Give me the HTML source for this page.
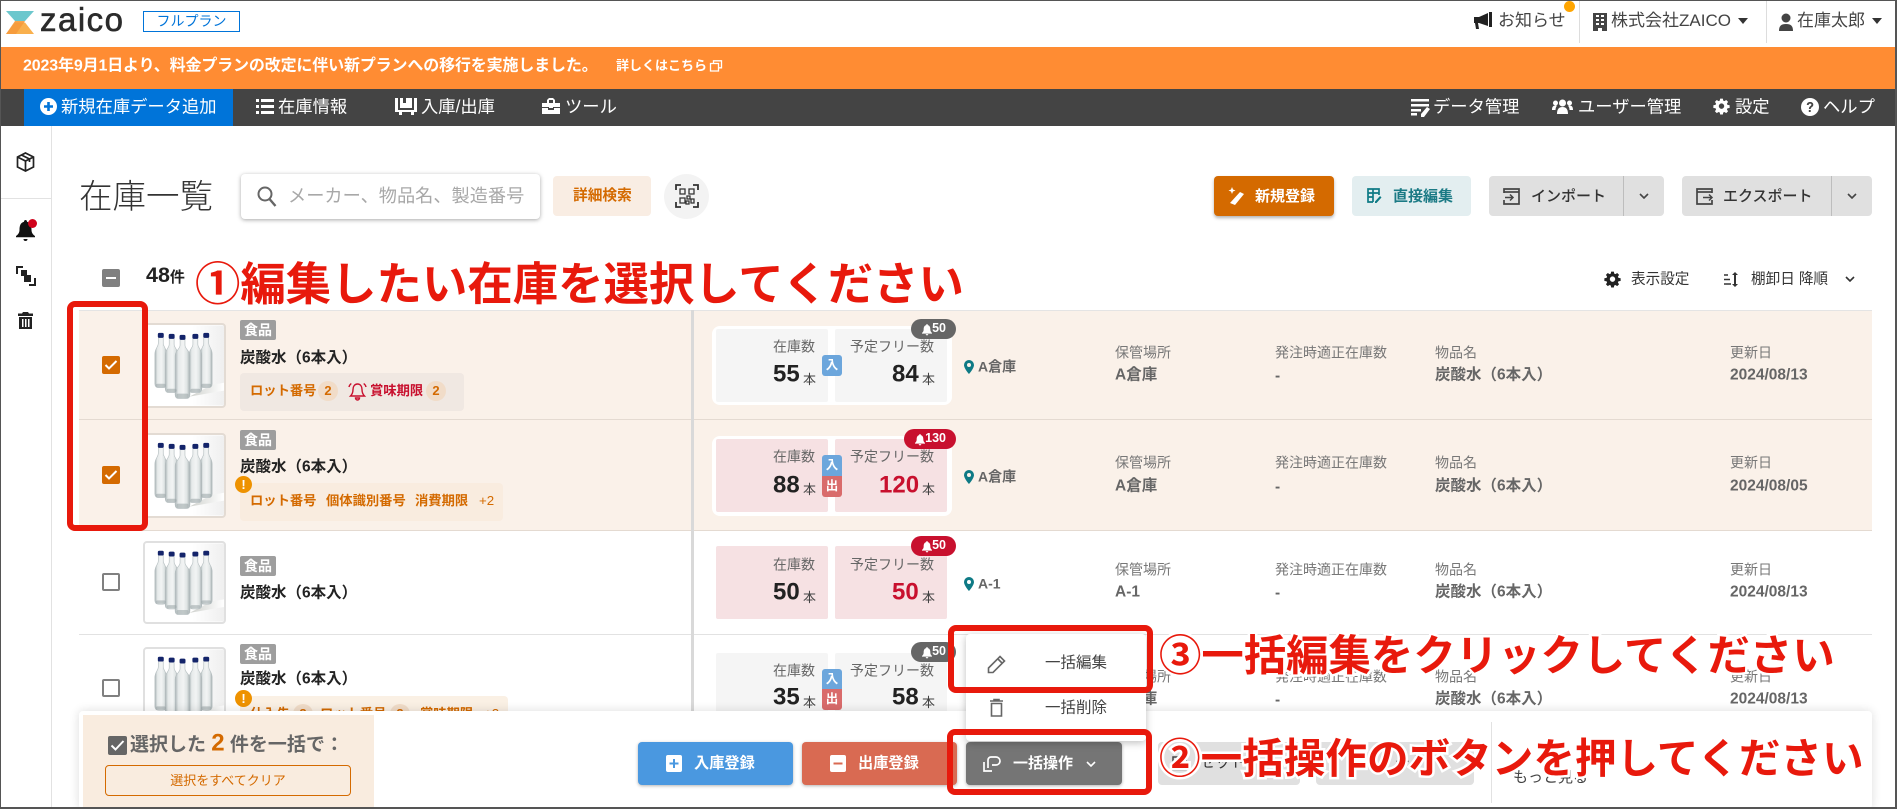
<!DOCTYPE html>
<html lang="ja"><head><meta charset="utf-8"><title>在庫一覧</title>
<style>
*{box-sizing:border-box;margin:0;padding:0}
html,body{width:1897px;height:809px;overflow:hidden;background:#fff}
body{position:relative;font-family:"Liberation Sans","Noto Sans CJK JP",sans-serif;color:#333}
.a{position:absolute}
.t{position:absolute;white-space:nowrap;transform:translateY(-50%);line-height:1.2}
.b{font-weight:700}
svg{position:absolute;overflow:visible}
.nav{color:#fff;font-size:17.3px}
.btn{position:absolute;border-radius:4px}
.lbl{font-size:14px;color:#777}
.val{font-size:15.5px;font-weight:700;color:#666}
.cell{position:absolute;width:112px;border-radius:2px}
.sl{font-size:14px;color:#666}
.num{font-size:24px;font-weight:700;color:#222}
.u{font-size:13px;color:#444}
.tag{position:absolute;left:240px;width:36px;height:20px;background:#9e9e9e;border-radius:2px;color:#fff;font-weight:700;font-size:14px;line-height:20px;text-align:center}
.nm{font-size:15.5px;font-weight:700;color:#222;left:240px}
.img{position:absolute;left:143px;width:83px;background:#fff;border:2px solid #e0e0e0;border-radius:4px;overflow:hidden}
.o{color:#d46a00;font-weight:700;font-size:13.3px}
.r{color:#c8102e;font-weight:700;font-size:13.3px}
.c2{position:absolute;width:20px;height:20px;border-radius:50%;background:#f1dcc8;color:#d46a00;font-size:13px;font-weight:700;text-align:center;line-height:20px}
.io{position:absolute;left:822px;width:20px;height:21px;color:#fff;font-size:12.5px;font-weight:700;text-align:center;line-height:21px}
.bd{position:absolute;height:20px;border-radius:10px;color:#fff;font-size:12.5px;font-weight:700;line-height:19px;text-align:right;padding-right:10px}
.rect{position:absolute;border:6px solid #e8190c;border-radius:8px}
.big{position:absolute;white-space:nowrap;transform:translateY(-50%);color:#e8190c;font-weight:700;line-height:1.2;-webkit-text-stroke:5px #fff;paint-order:stroke fill}
.cb{position:absolute;left:102px;width:18px;height:18px;border-radius:2px}
</style></head><body>
<svg width="0" height="0" style="position:absolute"><defs>
<linearGradient id="bg" x1="0" x2="1" y1="0" y2="0"><stop offset="0" stop-color="#a9b3b5"/><stop offset=".22" stop-color="#e6eaea"/><stop offset=".55" stop-color="#f2f4f4"/><stop offset=".8" stop-color="#dfe4e4"/><stop offset="1" stop-color="#a3adaf"/></linearGradient>
<linearGradient id="sh" x1="0" x2="1" y1="0" y2="0"><stop offset="0" stop-color="#cfd1cd"/><stop offset="1" stop-color="#fff"/></linearGradient>
<linearGradient id="bk" x1="0" x2="1" y1="0" y2="0"><stop offset=".6" stop-color="#fff"/><stop offset="1" stop-color="#efefef"/></linearGradient>
<symbol id="bot" viewBox="0 0 80 81">
<rect width="80" height="81" fill="url(#bk)"/>
<path d="M45 72 L68 60 L80 58 L80 66Z" fill="url(#sh)"/>
<g stroke="#b4bdbf" stroke-width=".6" fill="url(#bg)">
<path d="M13.500 12h5v6c0 4 3.500 5 3.500 11V59q0 4-4 4h-4q-4 0-4-4V29c0-6 3.500-7 3.500-11z"/>
<path d="M59.500 12h5v6c0 4 3.500 5 3.500 11V59q0 4-4 4h-4q-4 0-4-4V29c0-6 3.500-7 3.500-11z"/>
<path d="M24.500 13h5v6c0 4 4 5 4 11V64q0 4-4 4h-5q-4 0-4-4V30c0-6 4-7 4-11z"/>
<path d="M48.500 13h5v6c0 4 4 5 4 11V64q0 4-4 4h-5q-4 0-4-4V30c0-6 4-7 4-11z"/>
<path d="M35.500 14h5v6c0 4 5 5 5 11V70q0 4-4 4h-7q-4 0-4-4V31c0-6 5-7 5-11z"/>
</g>
<g fill="#9aa5a7" opacity=".55"><rect x="11" y="59" width="10" height="3.500" rx="1.500"/><rect x="57" y="59" width="10" height="3.500" rx="1.500"/><rect x="22" y="64" width="10" height="3.500" rx="1.500"/><rect x="46" y="64" width="10" height="3.500" rx="1.500"/><rect x="32" y="69" width="12" height="4.500" rx="1.500"/></g>
<g fill="#14246a"><rect x="13" y="7.500" width="6" height="5" rx="1.500"/><rect x="59" y="7.500" width="6" height="5" rx="1.500"/><rect x="24" y="8.500" width="6" height="5" rx="1.500"/><rect x="48" y="8.500" width="6" height="5" rx="1.500"/><rect x="35" y="9.500" width="6" height="5" rx="1.500"/></g>
</symbol>
<symbol id="bell" viewBox="0 0 12 14"><path d="M6 0a1 1 0 0 1 1 1.200C9.500 1.800 10 4 10 6.500c0 2 1 3.200 2 4v.8H0v-.8c1-.8 2-2 2-4C2 4 2.500 1.800 5 1.200A1 1 0 0 1 6 0zM4.500 12h3a1.500 1.500 0 0 1-3 0z" fill="currentColor"/></symbol>
<symbol id="pin" viewBox="0 0 10 14"><path d="M5 0a5 5 0 0 1 5 5c0 3.500-5 9-5 9S0 8.500 0 5a5 5 0 0 1 5-5zm0 3a2 2 0 1 0 0 4 2 2 0 0 0 0-4z" fill="#0e7a85"/></symbol>
<symbol id="gear" viewBox="0 0 16 16"><path fill-rule="evenodd" d="M6.500 0h3l.4 2.200 1.400.6L13.200 1.500l2.100 2.100-1.300 1.900.6 1.400 2.400.4v3l-2.400.4-.6 1.400 1.300 1.900-2.100 2.100-1.900-1.300-1.400.6-.4 2.200h-3l-.4-2.200-1.400-.6-1.900 1.300L.7 14l1.300-1.900-.6-1.400L-1 10.300v-3l2.400-.4.6-1.400L.7 3.600l2.100-2.100 1.900 1.300 1.400-.6zM8 5.300a3 3 0 1 0 0 6 3 3 0 0 0 0-6z" fill="currentColor" transform="translate(1.200 .6) scale(.85)"/></symbol>
<symbol id="chev" viewBox="0 0 10 6"><path d="M1 1l4 4 4-4" fill="none" stroke="currentColor" stroke-width="1.600"/></symbol>
</defs></svg>

<!-- header -->
<svg style="left:6px;top:11px" width="28" height="23" viewBox="0 0 28 23"><path d="M0 0h28l-9 10H9z" fill="#6cc7cd"/><path d="M9 11.500h10l9 11.500H0z" fill="#f9b04d"/><path d="M9 10h10L10 23H0z" fill="#f59a3c" opacity=".9"/></svg>
<div class="t" style="left:40px;top:20px;font-size:33px;color:#2b2b2b;letter-spacing:1.500px;-webkit-text-stroke:.6px #2b2b2b">zaico</div>
<div class="a" style="left:143px;top:11px;width:97px;height:21px;border:1px solid #0074d9;color:#0074d9;font-size:14px;text-align:center;line-height:19px">フルプラン</div>
<svg style="left:1473px;top:12px" width="20" height="18" viewBox="0 0 20 18"><path d="M16 0h3v15h-3zM1 5h5l9-4v13l-9-3H5l1 6H3l-1-6H1z" fill="#222"/></svg>
<div class="t" style="left:1498px;top:21px;font-size:17px;color:#444">お知らせ</div>
<div class="a" style="left:1564px;top:1px;width:11px;height:11px;border-radius:50%;background:#ffa500"></div>
<div class="a" style="left:1579px;top:1px;width:1px;height:42px;background:#ddd"></div>
<div class="a" style="left:1766px;top:1px;width:1px;height:42px;background:#ddd"></div>
<svg style="left:1593px;top:13px" width="14" height="18" viewBox="0 0 14 18"><path fill-rule="evenodd" d="M0 0h14v18H9v-3H5v3H0zM3 2v2h3V2zm5 0v2h3V2zM3 6v2h3V6zm5 0v2h3V6zM3 10v2h3v-2zm5 0v2h3v-2z" fill="#444"/></svg>
<div class="t" style="left:1611px;top:21px;font-size:17px;color:#444">株式会社ZAICO</div>
<div class="a" style="left:1738px;top:18px;border:5px solid transparent;border-top:6px solid #333;border-bottom:0"></div>
<svg style="left:1779px;top:13px" width="14" height="18" viewBox="0 0 14 18"><circle cx="7" cy="5" r="4.500" fill="#444"/><path d="M0 18c0-5 2-7 7-7s7 2 7 7z" fill="#444"/></svg>
<div class="t" style="left:1797px;top:21px;font-size:17px;color:#444">在庫太郎</div>
<div class="a" style="left:1872px;top:18px;border:5px solid transparent;border-top:6px solid #333;border-bottom:0"></div>

<!-- banner -->
<div class="a" style="left:0;top:47px;width:1897px;height:42px;background:#ff8c33"></div>
<div class="t b" style="left:23px;top:66px;font-size:16px;color:#fff;letter-spacing:-.15px">2023年9月1日より、料金プランの改定に伴い新プランへの移行を実施しました。</div>
<div class="t b" style="left:616px;top:66px;font-size:13px;color:#fff">詳しくはこちら</div>
<svg style="left:710px;top:60px" width="12" height="12" viewBox="0 0 12 12"><path d="M3.500 3V.8h8v7H9M.5 3.500h8v7.500h-8z" fill="none" stroke="#fff" stroke-width="1.300"/></svg>

<!-- nav -->
<div class="a" style="left:0;top:89px;width:1897px;height:37px;background:#444"></div>
<div class="a" style="left:24px;top:89px;width:209px;height:37px;background:#0074d9"></div>
<svg style="left:40px;top:98px" width="17" height="17" viewBox="0 0 17 17"><circle cx="8.500" cy="8.500" r="8.500" fill="#fff"/><path d="M8.500 4v9M4 8.500h9" stroke="#0074d9" stroke-width="2.600"/></svg>
<div class="t nav" style="left:61px;top:107px">新規在庫データ追加</div>
<svg style="left:256px;top:99px" width="18" height="15" viewBox="0 0 18 15"><path d="M0 0h3v3H0zM5 0h13v3H5zM0 6h3v3H0zM5 6h13v3H5zM0 12h3v3H0zM5 12h13v3H5z" fill="#fff"/></svg>
<div class="t nav" style="left:278px;top:107px">在庫情報</div>
<svg style="left:395px;top:98px" width="22" height="17" viewBox="0 0 22 17"><path fill-rule="evenodd" d="M0 0h3v12h16V0h3v14H19v3h-3v-3H7v3H4v-3H0zM5 0h3v5h3V0h6v10H5z" fill="#fff"/></svg>
<div class="t nav" style="left:421px;top:107px">入庫/出庫</div>
<svg style="left:542px;top:98px" width="18" height="16" viewBox="0 0 18 16"><path fill-rule="evenodd" d="M5 5V2l2-2h4l2 2v3h5v4h-7v1H7V9H0V5zM7 2v3h4V2zM0 10h6v2h6v-2h6v6H0z" fill="#fff"/></svg>
<div class="t nav" style="left:565px;top:107px">ツール</div>
<svg style="left:1411px;top:99px" width="19" height="18" viewBox="0 0 19 18"><path d="M0 0h18v2.500H0zM0 5h18v2.500H0zM0 10h10v2.500H0zM0 14h6v2.500H0zM16 8l3 2-6 8-3 0 0-3z" fill="#fff"/></svg>
<div class="t nav" style="left:1433px;top:107px">データ管理</div>
<svg style="left:1552px;top:99px" width="21" height="15" viewBox="0 0 21 15"><circle cx="10.500" cy="4" r="3.500" fill="#fff"/><circle cx="3.500" cy="4" r="2.500" fill="#fff"/><circle cx="17.500" cy="4" r="2.500" fill="#fff"/><path d="M5 15c0-5 2-7 5.500-7S16 10 16 15zM0 11c0-3 1-4.500 3.500-4.500 1 0 1.500.3 1.500.3-1 1.200-1.500 2.500-1.500 4.200zM21 11c0-3-1-4.500-3.500-4.500-1 0-1.500.3-1.500.3 1 1.200 1.500 2.500 1.500 4.200z" fill="#fff"/></svg>
<div class="t nav" style="left:1578px;top:107px">ユーザー管理</div>
<svg style="left:1713px;top:98px;color:#fff" width="17" height="17"><use href="#gear"/></svg>
<div class="t nav" style="left:1735px;top:107px">設定</div>
<svg style="left:1801px;top:98px" width="18" height="18" viewBox="0 0 18 18"><circle cx="9" cy="9" r="9" fill="#fff"/><path d="M5.800 7c0-2 1.400-3 3.300-3s3.200 1 3.200 2.700c0 2.300-2.600 2.300-2.600 4.300H7.900c0-3 2.500-3 2.500-4.300 0-.7-.5-1.100-1.300-1.100-.9 0-1.400.5-1.400 1.400zM7.800 12h1.900v2H7.800z" fill="#444"/></svg>
<div class="t nav" style="left:1823px;top:107px">ヘルプ</div>

<!-- sidebar -->
<div class="a" style="left:51px;top:126px;width:1px;height:683px;background:#e2e2e2"></div>
<div class="a" style="left:1px;top:198px;width:50px;height:1px;background:#e2e2e2"></div>
<svg style="left:16px;top:152px" width="19" height="20" viewBox="0 0 19 20"><path d="M9.500 1l8 4v10l-8 4-8-4V5zM1.500 5l8 4 8-4M9.500 9v10M5.500 3l8 4v3" fill="none" stroke="#222" stroke-width="1.700"/></svg>
<svg style="left:16px;top:220px;color:#111" width="19" height="22" viewBox="0 0 19 22"><path d="M9.500 0c1 0 1.500.8 1.500 1.800 3.500 1 4.500 4 4.500 8 0 3 1.500 5 3.500 6.200v1.300H0V16c2-1.200 3.500-3.200 3.500-6.200 0-4 1-7 4.500-8C8 .8 8.500 0 9.500 0zM7.500 19h4a2 2 0 0 1-4 0z" fill="#111"/></svg>
<div class="a" style="left:28px;top:219px;width:9px;height:9px;border-radius:50%;background:#d0021b"></div>
<svg style="left:16px;top:266px" width="20" height="20" viewBox="0 0 20 20"><path d="M7 1H1v7M13 19h6v-7" fill="none" stroke="#222" stroke-width="2"/><rect x="5" y="4" width="6" height="6" fill="#222"/><rect x="8" y="9" width="7" height="7" fill="#222"/></svg>
<svg style="left:18px;top:312px" width="15" height="17" viewBox="0 0 15 17"><path fill-rule="evenodd" d="M5 0h5l1 1.500h4V4H0V1.500h4zM1 5h13v12H1zM4 7v8h1.500V7zm3 0v8h1.500V7zm3 0v8h1.500V7z" fill="#222"/></svg>

<!-- toolbar -->
<div class="t" style="left:79px;top:198px;font-size:33.500px;color:#333;font-weight:300">在庫一覧</div>
<div class="a" style="left:241px;top:174px;width:299px;height:45px;background:#fff;border-radius:4px;box-shadow:0 1px 4px rgba(0,0,0,.35)"></div>
<svg style="left:257px;top:186px" width="20" height="21" viewBox="0 0 20 21"><circle cx="8" cy="8" r="6.500" fill="none" stroke="#666" stroke-width="2"/><path d="M12.500 13l6 7" stroke="#666" stroke-width="2.400"/></svg>
<div class="t" style="left:288px;top:197px;font-size:18.200px;color:#a8a8a8">メーカー、物品名、製造番号</div>
<div class="btn" style="left:553px;top:176px;width:98px;height:40px;background:#f9ede3"></div>
<div class="t b" style="left:573px;top:197px;font-size:14.7px;color:#d46a00">詳細検索</div>
<div class="a" style="left:664px;top:174px;width:45px;height:45px;border-radius:50%;background:#f3f3f3"></div>
<svg style="left:675px;top:184px" width="24" height="24" viewBox="0 0 24 24"><path d="M1 6V1h5M18 1h5v5M23 18v5h-5M6 23H1v-5" fill="none" stroke="#333" stroke-width="1.800"/><path d="M5 5h5v5H5zM14 5h5v5h-5zM5 14h5v5H5zM12 12h3v3h-3zM16 15h3v4h-3zM11 17h3v3h-3z" fill="none" stroke="#333" stroke-width="1.300"/></svg>

<div class="btn" style="left:1214px;top:176px;width:120px;height:40px;background:#d46a00;box-shadow:0 2px 3px rgba(0,0,0,.3)"></div>
<svg style="left:1228px;top:187px" width="17" height="18" viewBox="0 0 17 18"><path d="M12 5l4 2-9 11-5-2zM4 0l1 2.500L7.500 3.500 5 4.500 4 7 3 4.500.5 3.500 3 2.500z" fill="#fff"/></svg>
<div class="t b" style="left:1255px;top:197px;font-size:15px;color:#fff">新規登録</div>
<div class="btn" style="left:1352px;top:176px;width:119px;height:40px;background:#e3eef0"></div>
<svg style="left:1367px;top:188px" width="15" height="15" viewBox="0 0 15 15"><path d="M6 14H1V1h11v6M1 5h11M6 1v13M1 9h5" fill="none" stroke="#0e7a85" stroke-width="1.700"/><path d="M13 8l1.500 1.500L9.500 15H8v-1.500z" fill="#0e7a85"/></svg>
<div class="t b" style="left:1393px;top:197px;font-size:15px;color:#1b7a85">直接編集</div>

<div class="btn" style="left:1489px;top:176px;width:175px;height:40px;background:#e0e0e0"></div>
<div class="a" style="left:1623px;top:176px;width:1px;height:40px;background:#bdbdbd"></div>
<svg style="left:1503px;top:188px" width="17" height="17" viewBox="0 0 17 17"><path d="M1 5V1h15v15H1v-4" fill="none" stroke="#444" stroke-width="1.700"/><path d="M1 4h15" stroke="#444" stroke-width="1.700"/><path d="M2 9.500h8M7 6.500l3 3-3 3" fill="none" stroke="#444" stroke-width="1.500"/></svg>
<div class="t" style="left:1531px;top:197px;font-size:15px;color:#333;font-weight:500">インポート</div>
<svg style="left:1639px;top:193px;color:#444" width="10" height="6"><use href="#chev"/></svg>
<div class="btn" style="left:1682px;top:176px;width:190px;height:40px;background:#e0e0e0"></div>
<div class="a" style="left:1831px;top:176px;width:1px;height:40px;background:#bdbdbd"></div>
<svg style="left:1696px;top:188px" width="17" height="17" viewBox="0 0 17 17"><path d="M16 5V1H1v15h15v-4" fill="none" stroke="#444" stroke-width="1.700"/><path d="M1 4h15" stroke="#444" stroke-width="1.700"/><path d="M7 9.500h9M13 6.500l3 3-3 3" fill="none" stroke="#444" stroke-width="1.500"/></svg>
<div class="t" style="left:1723px;top:197px;font-size:15px;color:#333;font-weight:500">エクスポート</div>
<svg style="left:1847px;top:193px;color:#444" width="10" height="6"><use href="#chev"/></svg>

<div class="a" style="left:102px;top:269px;width:18px;height:18px;background:#808080;border-radius:2px"></div>
<div class="a" style="left:106px;top:277px;width:10px;height:2px;background:#fff"></div>
<div class="t b" style="left:146px;top:276px;font-size:21.500px;color:#222">48<span style="font-size:15px">件</span></div>

<svg style="left:1604px;top:271px;color:#222" width="17" height="17"><use href="#gear"/></svg>
<div class="t" style="left:1631px;top:280px;font-size:14.6px;color:#333">表示設定</div>
<svg style="left:1724px;top:272px" width="15" height="15" viewBox="0 0 15 15"><path d="M0 3h4M0 7.500h6M0 12h7" stroke="#333" stroke-width="1.500"/><path d="M11 0l3 3h-2v9h2l-3 3-3-3h2V3H8z" fill="#333"/></svg>
<div class="t" style="left:1751px;top:280px;font-size:14.6px;color:#333">棚卸日 降順</div>
<svg style="left:1845px;top:276px;color:#333" width="10" height="6"><use href="#chev"/></svg>

<!-- rows -->
<div class="a" style="left:79px;top:310px;width:1793px;height:110px;background:#faf1e9;border-top:1px solid #e4e4e4;border-bottom:1px solid #e4dad1"></div>
<div class="a" style="left:79px;top:420px;width:1793px;height:111px;background:#faf1e9;border-bottom:1px solid #e4dad1"></div>
<div class="a" style="left:79px;top:634px;width:1793px;height:1px;background:#e2e2e2"></div>
<div class="a" style="left:691px;top:310px;width:3px;height:401px;background:#d9d9d9"></div>

<!-- checkboxes -->
<div class="cb" style="top:356px;background:#d46a00"></div>
<svg style="left:104px;top:360px" width="14" height="10" viewBox="0 0 14 10"><path d="M1.500 5l3.500 3.500L12.500 1" fill="none" stroke="#fff" stroke-width="2"/></svg>
<div class="cb" style="top:466px;background:#d46a00"></div>
<svg style="left:104px;top:470px" width="14" height="10" viewBox="0 0 14 10"><path d="M1.500 5l3.500 3.500L12.500 1" fill="none" stroke="#fff" stroke-width="2"/></svg>
<div class="cb" style="top:573px;border:2px solid #808080"></div>
<div class="cb" style="top:679px;border:2px solid #808080"></div>

<!-- images -->
<div class="img" style="top:323px;height:85px;border-color:#e3dbd3"><svg width="79" height="81" style="left:0;top:0" viewBox="0 0 79 81" preserveAspectRatio="none"><use href="#bot" width="79" height="81"/></svg></div>
<div class="img" style="top:433px;height:85px;border-color:#e3dbd3"><svg width="79" height="81" style="left:0;top:0" viewBox="0 0 79 81" preserveAspectRatio="none"><use href="#bot" width="79" height="81"/></svg></div>
<div class="img" style="top:541px;height:83px"><svg width="79" height="79" style="left:0;top:0" viewBox="0 0 79 81" preserveAspectRatio="none"><use href="#bot" width="79" height="81"/></svg></div>
<div class="img" style="top:647px;height:83px"><svg width="79" height="79" style="left:0;top:0" viewBox="0 0 79 81" preserveAspectRatio="none"><use href="#bot" width="79" height="81"/></svg></div>

<!-- row names -->
<div class="tag" style="top:320px">食品</div>
<div class="t nm" style="top:359px">炭酸水（6本入）</div>
<div class="a" style="left:240px;top:373px;width:224px;height:38px;background:#f0e8e2;border-radius:4px"></div>
<div class="t o" style="left:250px;top:391px">ロット番号</div>
<div class="c2" style="left:318px;top:381px">2</div>
<svg style="left:348px;top:382px" width="19" height="19" viewBox="0 0 19 19"><path d="M9.500 2c3 0 4.500 2.500 4.500 5.500 0 3 1 5 2.500 6.500h-14C4 12.500 5 10.500 5 7.500 5 4.500 6.500 2 9.500 2zM7.500 16h4a2 2 0 0 1-4 0zM1 5c.3-1.500 1-2.500 2.300-3.500M18 5c-.3-1.500-1-2.500-2.300-3.500" fill="none" stroke="#c8102e" stroke-width="1.400"/></svg>
<div class="t r" style="left:370px;top:391px">賞味期限</div>
<div class="c2" style="left:426px;top:381px">2</div>

<div class="tag" style="top:430px">食品</div>
<div class="t nm" style="top:468px">炭酸水（6本入）</div>
<div class="a" style="left:240px;top:483px;width:263px;height:38px;background:#f9ecdf;border-radius:4px"></div>
<div class="t o" style="left:250px;top:501px">ロット番号</div>
<div class="t o" style="left:326px;top:501px">個体識別番号</div>
<div class="t o" style="left:415px;top:501px">消費期限</div>
<div class="t" style="left:479px;top:501px;font-size:13.3px;color:#d46a00">+2</div>
<div class="a" style="left:235px;top:476px;width:17px;height:17px;border-radius:50%;background:#ee9200;color:#fff;font-weight:700;font-size:13px;text-align:center;line-height:17px">!</div>

<div class="tag" style="top:556px">食品</div>
<div class="t nm" style="top:594px">炭酸水（6本入）</div>

<div class="tag" style="top:644px">食品</div>
<div class="t nm" style="top:680px">炭酸水（6本入）</div>
<div class="a" style="left:240px;top:696px;width:268px;height:38px;background:#faf0e4;border-radius:4px"></div>
<div class="t o" style="left:250px;top:714px">仕入先</div>
<div class="c2" style="left:293px;top:704px">2</div>
<div class="t o" style="left:320px;top:714px">ロット番号</div>
<div class="c2" style="left:390px;top:704px">2</div>
<div class="t o" style="left:420px;top:714px">賞味期限</div>
<div class="t" style="left:484px;top:714px;font-size:13.3px;color:#d46a00">+2</div>
<div class="a" style="left:235px;top:690px;width:17px;height:17px;border-radius:50%;background:#ee9200;color:#fff;font-weight:700;font-size:13px;text-align:center;line-height:17px">!</div>

<!-- stock row1 -->
<div class="a" style="left:712px;top:326px;width:240px;height:79px;background:#fff;border-radius:8px"></div>
<div class="cell" style="left:716px;top:329px;height:73px;background:#f5f5f5"></div>
<div class="cell" style="left:835px;top:329px;height:73px;background:#f5f5f5"></div>
<div class="t sl" style="left:773px;top:347px">在庫数</div>
<div class="t num" style="left:773px;top:375px">55</div><div class="t u" style="left:803px;top:380px">本</div>
<div class="t sl" style="left:850px;top:347px">予定フリー数</div>
<div class="t num" style="left:892px;top:375px">84</div><div class="t u" style="left:922px;top:380px">本</div>
<div class="io" style="top:355px;background:#6ca6dc;border-radius:3px">入</div>
<div class="bd" style="left:911px;top:319px;width:45px;background:#666">50</div>
<svg style="left:922px;top:324px;color:#fff" width="10" height="12"><use href="#bell"/></svg>
<svg style="left:964px;top:360px" width="10" height="14"><use href="#pin"/></svg>
<div class="t b" style="left:978px;top:367px;font-size:14px;color:#666">A倉庫</div>

<!-- stock row2 -->
<div class="a" style="left:712px;top:436px;width:240px;height:80px;background:#fff;border-radius:8px"></div>
<div class="cell" style="left:716px;top:439px;height:73px;background:#f6e1e3"></div>
<div class="cell" style="left:835px;top:439px;height:73px;background:#f6e1e3"></div>
<div class="t sl" style="left:773px;top:457px">在庫数</div>
<div class="t num" style="left:773px;top:486px">88</div><div class="t u" style="left:803px;top:490px">本</div>
<div class="t sl" style="left:850px;top:457px">予定フリー数</div>
<div class="t num" style="left:879px;top:486px;color:#c8102e">120</div><div class="t u" style="left:922px;top:490px">本</div>
<div class="io" style="top:455px;background:#6ca6dc;border-radius:3px 3px 0 0">入</div>
<div class="io" style="top:476px;background:#d96b6b;border-radius:0 0 3px 3px">出</div>
<div class="bd" style="left:904px;top:429px;width:52px;background:#c8102e">130</div>
<svg style="left:915px;top:434px;color:#fff" width="10" height="12"><use href="#bell"/></svg>
<svg style="left:964px;top:470px" width="10" height="14"><use href="#pin"/></svg>
<div class="t b" style="left:978px;top:477px;font-size:14px;color:#666">A倉庫</div>

<!-- stock row3 -->
<div class="cell" style="left:716px;top:546px;height:73px;background:#f6e1e3"></div>
<div class="cell" style="left:835px;top:546px;height:73px;background:#f6e1e3"></div>
<div class="t sl" style="left:773px;top:565px">在庫数</div>
<div class="t num" style="left:773px;top:593px">50</div><div class="t u" style="left:803px;top:598px">本</div>
<div class="t sl" style="left:850px;top:565px">予定フリー数</div>
<div class="t num" style="left:892px;top:593px;color:#c8102e">50</div><div class="t u" style="left:922px;top:598px">本</div>
<div class="bd" style="left:911px;top:536px;width:45px;background:#c8102e">50</div>
<svg style="left:922px;top:541px;color:#fff" width="10" height="12"><use href="#bell"/></svg>
<svg style="left:964px;top:577px" width="10" height="14"><use href="#pin"/></svg>
<div class="t b" style="left:978px;top:584px;font-size:14px;color:#666">A-1</div>

<!-- stock row4 -->
<div class="cell" style="left:716px;top:653px;height:73px;background:#f5f5f5"></div>
<div class="cell" style="left:835px;top:653px;height:73px;background:#f5f5f5"></div>
<div class="t sl" style="left:773px;top:671px">在庫数</div>
<div class="t num" style="left:773px;top:698px">35</div><div class="t u" style="left:803px;top:703px">本</div>
<div class="t sl" style="left:850px;top:671px">予定フリー数</div>
<div class="t num" style="left:892px;top:698px">58</div><div class="t u" style="left:922px;top:703px">本</div>
<div class="io" style="top:669px;background:#6ca6dc;border-radius:3px 3px 0 0">入</div>
<div class="io" style="top:689px;background:#d96b6b;border-radius:0 0 3px 3px">出</div>
<div class="bd" style="left:911px;top:642px;width:45px;background:#666">50</div>
<svg style="left:922px;top:647px;color:#fff" width="10" height="12"><use href="#bell"/></svg>

<!-- columns -->
<div class="t lbl" style="left:1115px;top:353px">保管場所</div><div class="t val" style="left:1115px;top:376px">A倉庫</div>
<div class="t lbl" style="left:1275px;top:353px">発注時適正在庫数</div><div class="t val" style="left:1275px;top:377px">-</div>
<div class="t lbl" style="left:1435px;top:353px">物品名</div><div class="t val" style="left:1435px;top:376px">炭酸水（6本入）</div>
<div class="t lbl" style="left:1730px;top:353px">更新日</div><div class="t val" style="left:1730px;top:376px">2024/08/13</div>

<div class="t lbl" style="left:1115px;top:463px">保管場所</div><div class="t val" style="left:1115px;top:487px">A倉庫</div>
<div class="t lbl" style="left:1275px;top:463px">発注時適正在庫数</div><div class="t val" style="left:1275px;top:488px">-</div>
<div class="t lbl" style="left:1435px;top:463px">物品名</div><div class="t val" style="left:1435px;top:487px">炭酸水（6本入）</div>
<div class="t lbl" style="left:1730px;top:463px">更新日</div><div class="t val" style="left:1730px;top:487px">2024/08/05</div>

<div class="t lbl" style="left:1115px;top:570px">保管場所</div><div class="t val" style="left:1115px;top:593px">A-1</div>
<div class="t lbl" style="left:1275px;top:570px">発注時適正在庫数</div><div class="t val" style="left:1275px;top:594px">-</div>
<div class="t lbl" style="left:1435px;top:570px">物品名</div><div class="t val" style="left:1435px;top:593px">炭酸水（6本入）</div>
<div class="t lbl" style="left:1730px;top:570px">更新日</div><div class="t val" style="left:1730px;top:593px">2024/08/13</div>

<div class="t lbl" style="left:1115px;top:677px">保管場所</div><div class="t val" style="left:1115px;top:700px">A倉庫</div>
<div class="t lbl" style="left:1275px;top:677px">発注時適正在庫数</div><div class="t val" style="left:1275px;top:701px">-</div>
<div class="t lbl" style="left:1435px;top:677px">物品名</div><div class="t val" style="left:1435px;top:700px">炭酸水（6本入）</div>
<div class="t lbl" style="left:1730px;top:677px">更新日</div><div class="t val" style="left:1730px;top:700px">2024/08/13</div>

<!-- footer bar -->
<div class="a" style="left:79px;top:711px;width:1793px;height:98px;background:#fff;border-radius:4px;box-shadow:0 0 10px rgba(0,0,0,.14)"></div>
<div class="a" style="left:83px;top:715px;width:291px;height:92px;background:#f9ecdf"></div>
<svg style="left:108px;top:736px" width="19" height="19" viewBox="0 0 19 19"><rect width="19" height="19" rx="2" fill="#666"/><path d="M3.500 9.500l4 4 8-8.500" fill="none" stroke="#fff" stroke-width="2"/></svg>
<div class="t b" style="left:130px;top:744px;font-size:19px;color:#666">選択した <span style="font-size:24px;color:#d46a00">2</span> 件を一括で：</div>
<div class="a" style="left:105px;top:765px;width:246px;height:31px;border:1px solid #d46a00;border-radius:4px;color:#d46a00;font-size:13px;text-align:center;line-height:29px">選択をすべてクリア</div>

<div class="btn" style="left:638px;top:742px;width:155px;height:43px;background:#4a98e0;box-shadow:0 1px 3px rgba(0,0,0,.3)"></div>
<svg style="left:666px;top:755px" width="16" height="17" viewBox="0 0 16 17"><rect width="16" height="17" rx="2" fill="#fff"/><path d="M8 4v9M3.500 8.500h9" stroke="#4a98e0" stroke-width="2"/></svg>
<div class="t b" style="left:694px;top:764px;font-size:15.2px;color:#fff">入庫登録</div>
<div class="btn" style="left:802px;top:742px;width:155px;height:43px;background:#d96a52;box-shadow:0 1px 3px rgba(0,0,0,.3)"></div>
<svg style="left:830px;top:755px" width="16" height="17" viewBox="0 0 16 17"><rect width="16" height="17" rx="2" fill="#fff"/><path d="M3.500 8.500h9" stroke="#d96a52" stroke-width="2"/></svg>
<div class="t b" style="left:858px;top:764px;font-size:15.2px;color:#fff">出庫登録</div>
<div class="btn" style="left:966px;top:742px;width:156px;height:43px;background:#757575;box-shadow:0 1px 3px rgba(0,0,0,.3)"></div>
<svg style="left:983px;top:756px" width="18" height="16" viewBox="0 0 18 16"><path d="M5 12V4a3 3 0 0 1 3-3h5a4 4 0 0 1 0 8H9M1 6v9h8" fill="none" stroke="#fff" stroke-width="1.700"/></svg>
<div class="t b" style="left:1013px;top:764px;font-size:15px;color:#fff">一括操作</div>
<svg style="left:1086px;top:761px;color:#fff" width="10" height="6"><use href="#chev"/></svg>
<div class="btn" style="left:1158px;top:742px;width:142px;height:43px;background:#e0e0e0"></div>
<svg style="left:1172px;top:756px" width="15" height="15" viewBox="0 0 15 15"><path d="M1 1h13v13H1z" fill="none" stroke="#444" stroke-width="1.500"/></svg>
<div class="t" style="left:1200px;top:763px;font-size:15px;color:#333">セット</div>
<div class="btn" style="left:1316px;top:742px;width:158px;height:43px;background:#e0e0e0"></div>
<div class="t" style="left:1395px;top:763px;font-size:15px;color:#333">ート</div>
<div class="a" style="left:1491px;top:722px;width:1px;height:81px;background:#e2e2e2"></div>
<div class="t" style="left:1513px;top:778px;font-size:15px;color:#444">もっと見る</div>

<!-- dropdown -->
<div class="a" style="left:966px;top:634px;width:180px;height:107px;background:#fff;border-radius:4px;box-shadow:0 2px 8px rgba(0,0,0,.25)"></div>
<svg style="left:987px;top:655px" width="19" height="19" viewBox="0 0 19 19"><path d="M13 1.500l4.500 4.500L6 17.500H1.500V13zM11 4l4 4" fill="none" stroke="#666" stroke-width="1.600"/></svg>
<div class="t" style="left:1045px;top:664px;font-size:15.5px;color:#444">一括編集</div>
<svg style="left:990px;top:699px" width="13" height="18" viewBox="0 0 13 18"><path d="M0 2h13M4 2V.5h5V2M1.500 4.500h10V17h-10z" fill="none" stroke="#666" stroke-width="1.600"/></svg>
<div class="t" style="left:1045px;top:709px;font-size:15.5px;color:#444">一括削除</div>

<!-- annotations -->
<div class="rect" style="left:67px;top:301px;width:81px;height:230px"></div>
<div class="rect" style="left:948px;top:625px;width:205px;height:68px"></div>
<div class="rect" style="left:947px;top:729px;width:205px;height:66px"></div>
<div class="big" style="left:195px;top:285px;font-size:45.400px">①編集したい在庫を選択してください</div>
<div class="big" style="left:1159px;top:657px;font-size:42.4px">③一括編集をクリックしてください</div>
<div class="big" style="left:1159px;top:759px;font-size:41.6px">②一括操作のボタンを押してください</div>

<!-- frame -->
<div class="a" style="left:0;top:0;width:1897px;height:809px;border:1px solid #555;border-right-width:2px;border-bottom-width:2px;pointer-events:none"></div>
</body></html>
